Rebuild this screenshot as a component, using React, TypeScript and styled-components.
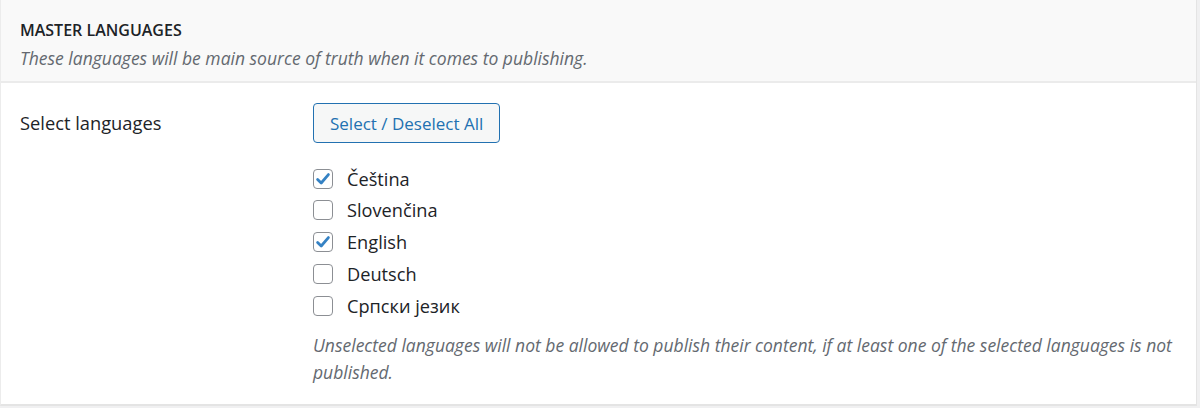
import React, { useState } from "react";
import styled, { createGlobalStyle } from "styled-components";

const GlobalStyle = createGlobalStyle`
  body {
    margin: 0;
    background: #f0f0f1;
    font-family: "Open Sans", "Noto Sans", sans-serif;
    color: #1d2327;
  }
`;

const languages = [
  { code: "cs", name: "Čeština" },
  { code: "sk", name: "Slovenčina" },
  { code: "en", name: "English" },
  { code: "de", name: "Deutsch" },
  { code: "sr", name: "Српски језик" },
];

function App() {
  const [selected, setSelected] = useState<string[]>(["cs", "en"]);

  const toggle = (code: string) => {
    setSelected((prev) =>
      prev.includes(code) ? prev.filter((c) => c !== code) : [...prev, code]
    );
  };

  const toggleAll = () => {
    setSelected((prev) => (prev.length === languages.length ? [] : languages.map((l) => l.code)));
  };

  return (
    <>
      <GlobalStyle />
      <Card>
        <Header>
          <Title>Master languages</Title>
          <Subtitle>These languages will be main source of truth when it comes to publishing.</Subtitle>
        </Header>
        <Body>
          <FieldLabel>Select languages</FieldLabel>
          <Field>
            <Button type="button" onClick={toggleAll}>
              Select / Deselect All
            </Button>
            <CheckList>
              {languages.map((lang) => {
                const checked = selected.includes(lang.code);
                return (
                  <CheckRow key={lang.code}>
                    <HiddenInput type="checkbox" checked={checked} onChange={() => toggle(lang.code)} />
                    <Box>
                      {checked && (
                        <svg width="18" height="18" viewBox="0 0 18 18">
                          <path d="M3.6 9.4 L7.2 13 L14.4 4.6" fill="none" stroke="#3582c4" strokeWidth="2.8" strokeLinecap="round" strokeLinejoin="round" />
                        </svg>
                      )}
                    </Box>
                    {lang.name}
                  </CheckRow>
                );
              })}
            </CheckList>
            <Note>
              Unselected languages will not be allowed to publish their content, if at least one of the selected languages is not published.
            </Note>
          </Field>
        </Body>
      </Card>
    </>
  );
}

export default App;

const Card = styled.div`
  width: 1197px;
  background: #fff;
  border-left: 1px solid #ececec;
  border-right: 1px solid #e4e4e4;
  border-bottom: 2px solid #e4e4e4;
  box-sizing: border-box;
`;

const Header = styled.div`
  background: #f9f9f9;
  border-bottom: 2px solid #ebebeb;
  padding: 19px 19px 10px;
`;

const Title = styled.h2`
  margin: 0;
  font-size: 16px;
  font-weight: 600;
  line-height: 22px;
  text-transform: uppercase;
  color: #1d2327;
`;

const Subtitle = styled.p`
  margin: 4px 0 0;
  font-size: 17.5px;
  font-style: italic;
  line-height: 26px;
  color: #646970;
`;

const Body = styled.div`
  display: grid;
  grid-template-columns: 293px 1fr;
  padding: 20px 8px 18px 19px;
`;

const FieldLabel = styled.div`
  font-size: 18.3px;
  line-height: 40px;
  color: #1d2327;
`;

const Field = styled.div`
  display: flex;
  flex-direction: column;
  align-items: flex-start;
`;

const Button = styled.button`
  height: 40px;
  padding: 0 16px;
  font-family: inherit;
  font-size: 17px;
  color: #2271b1;
  background: #f6f7f7;
  border: 1px solid #2271b1;
  border-radius: 4px;
  cursor: pointer;
`;

const CheckList = styled.div`
  display: flex;
  flex-direction: column;
  gap: 11.75px;
  margin-top: 25.5px;
`;

const CheckRow = styled.label`
  display: flex;
  align-items: center;
  gap: 14px;
  height: 20px;
  font-size: 18.2px;
  color: #1d2327;
  cursor: pointer;
`;

const HiddenInput = styled.input`
  display: none;
`;

const Box = styled.span`
  display: flex;
  align-items: center;
  justify-content: center;
  width: 20px;
  height: 20px;
  box-sizing: border-box;
  border: 1px solid #8c8f94;
  border-radius: 4px;
  background: #fff;
`;

const Note = styled.p`
  margin: 16.5px 0 0;
  font-size: 17.5px;
  font-style: italic;
  line-height: 27px;
  color: #646970;
`;
